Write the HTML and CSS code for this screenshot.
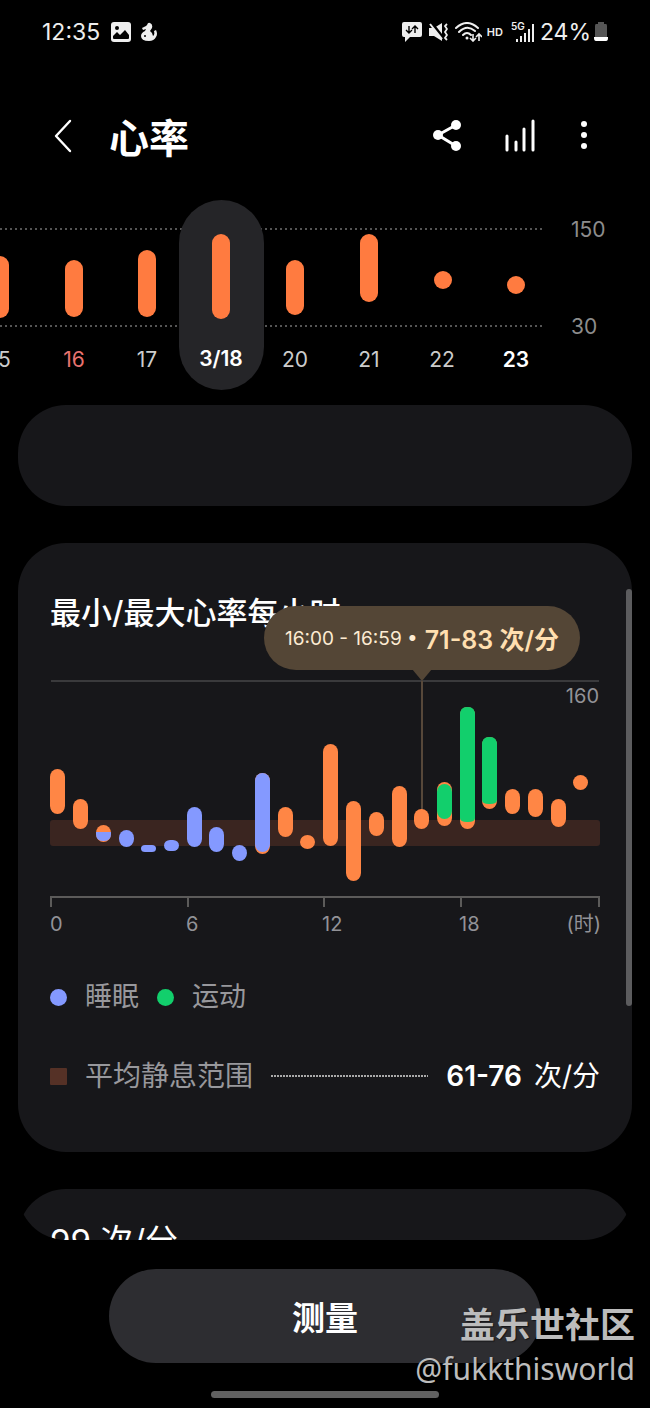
FILE: index.html
```html
<!DOCTYPE html>
<html lang="zh-CN">
<head>
<meta charset="utf-8">
<meta name="viewport" content="width=device-width, initial-scale=1">
<title>心率</title>
<link rel="stylesheet" href="styles.css">
</head>
<body>
<div class="status">
  <span class="status-text">12:35</span>
  <svg class="status-image" width="20" height="20" viewBox="0 0 20 20" aria-hidden="true">
    <rect width="20" height="20" rx="3" fill="#eee"/>
    <circle cx="6" cy="6" r="2" fill="#000"/>
    <path d="M2 16V14l4-4 3 3 5-5 4 5v3q0 1-1 1H3q-1 0-1-1z" fill="#000"/>
  </svg>
  <svg class="status-pet" width="16" height="20" viewBox="0 0 16 20" aria-hidden="true">
    <path d="M6 3Q7 0 9 1q3 1 2 5L9 9q3 2 3 5 2-1 1-5l2-1q2 4 0 7-2 4-7 4Q0 19 0 14q0-3 4-5l1-2-3 1-1-2 4-2z" fill="#eee"/>
    <circle cx="4" cy="14" r="1" fill="#000"/>
  </svg>
  <span class="status-space"></span>
  <svg class="status-message" width="20" height="20" viewBox="0 0 20 20" aria-hidden="true">
    <path d="M2 0h16q2 0 2 2v11q0 2-2 2H8l-5 5v-5H2q-2 0-2-2V2q0-2 2-2z" fill="#eee"/>
    <path d="M7 4v7M4 8l3 3 3-3M13 11V4M10 7l3-3 3 3" fill="none" stroke="#000" stroke-width="1.4"/>
  </svg>
  <svg class="status-mute" width="19" height="20" viewBox="0 0 19 20" aria-hidden="true">
    <path d="M0 6h5l8-5v18l-8-5H0z" fill="#eee"/>
    <path d="M1 -1l14 18" stroke="#000" stroke-width="3"/>
    <path d="M1 2l12 15" stroke="#eee" stroke-width="2"/>
    <path d="M18 2l-2 2 2 3-2 3 2 3-2 3 2 2" fill="none" stroke="#eee" stroke-width="1.8"/>
  </svg>
  <svg class="status-wifi" width="27" height="20" viewBox="0 0 27 20" aria-hidden="true">
    <path d="M1 6Q12-4 23 6M4 10q8-8 16-1M8 13q4-4 8 0" fill="none" stroke="#eee" stroke-width="2" stroke-linecap="round"/>
    <circle cx="12" cy="16" r="1.5" fill="#eee"/>
    <path d="M18 12v7M15 16l3 3 3-3M24 19v-7M21 15l3-3 3 3" fill="none" stroke="#eee" stroke-width="1.6"/>
  </svg>
  <span class="status-hd">HD</span>
  <svg class="status-signal" width="24" height="22" viewBox="0 0 24 22" role="img" aria-label="5G">
    <text class="signal-text" x="0" y="9">5G</text>
    <path d="M6 18v3M10 15v6M14 12v9M18 8v13M22 3v18" stroke="#eee" stroke-width="2"/>
  </svg>
  <span class="status-text">24%</span>
  <svg class="status-battery" width="14" height="20" viewBox="0 0 14 20" aria-hidden="true">
    <path d="M4 0h6v2h2q1 0 1 2v12H1V4q0-2 1-2h2z" fill="#555"/>
    <path d="M0 15h14v1q0 3-2 3H2q-2 0-2-3z" fill="#fff"/>
  </svg>
</div>

<header class="appbar">
  <button class="icon-button back" type="button" aria-label="返回">
    <svg width="20" height="34" viewBox="0 0 20 34"><path d="M17 2L3 17l14 15" fill="none" stroke="#fff" stroke-width="2.4" stroke-linecap="round" stroke-linejoin="round"/></svg>
  </button>
  <h1 class="appbar-title">心率</h1>
  <button class="icon-button" type="button" aria-label="分享">
    <svg width="32" height="34" viewBox="0 0 32 34"><path d="M24 6L6 16l18 11" fill="none" stroke="#fff" stroke-width="3"/><g fill="#fff"><circle cx="24" cy="6" r="5"/><circle cx="6" cy="16" r="5"/><circle cx="24" cy="27" r="5"/></g></svg>
  </button>
  <button class="icon-button" type="button" aria-label="图表">
    <svg width="32" height="34" viewBox="0 0 32 34"><path d="M3 17v14M12 23v8M20 10v21M29 2v29" stroke="#fff" stroke-width="3" stroke-linecap="round"/></svg>
  </button>
  <button class="icon-button" type="button" aria-label="更多选项">
    <svg width="16" height="34" viewBox="0 0 16 34"><g fill="#fff"><circle cx="8" cy="5" r="3"/><circle cx="8" cy="16" r="3"/><circle cx="8" cy="27" r="3"/></g></svg>
  </button>
</header>

<svg class="trend" viewBox="0 200 650 190" role="img" aria-label="每日心率">
  <path class="trend-grid" d="M0 229H544M0 326H544"/>
  <rect class="trend-selected" x="179" y="200" width="85" height="190" rx="43"/>
  <g class="trend-bars">
    <rect x="-9" y="256" width="18" height="62" rx="9"/>
    <rect x="65" y="260" width="18" height="57" rx="9"/>
    <rect x="138" y="250" width="18" height="67" rx="9"/>
    <rect x="212" y="234" width="18" height="85" rx="9"/>
    <rect x="286" y="260" width="18" height="55" rx="9"/>
    <rect x="360" y="234" width="18" height="68" rx="9"/>
    <circle cx="443" cy="280" r="9"/>
    <circle cx="516" cy="285" r="9"/>
  </g>
  <g class="trend-days">
    <text x="0" y="367">15</text>
    <text class="holiday" x="74" y="367">16</text>
    <text x="147" y="367">17</text>
    <text class="strong" x="221" y="366">3/18</text>
    <text x="295" y="367">20</text>
    <text x="369" y="367">21</text>
    <text x="442" y="367">22</text>
    <text class="strong" x="516" y="367">23</text>
  </g>
  <g class="trend-scale">
    <text x="571" y="237">150</text>
    <text x="571" y="334">30</text>
  </g>
</svg>

<main class="viewport">
  <div class="scroll">
    <section class="card card-empty"></section>
    <section class="card card-hourly">
      <h2 class="card-title">最小/最大心率每小时</h2>
      <div class="chart">
        <svg class="chart-plot" viewBox="50 670 550 270" role="img" aria-label="每小时最小和最大心率">
          <path class="chart-top" d="M51 681H599"/>
          <rect class="chart-band" x="50" y="820" width="550" height="26" rx="3"/>
          <path class="chart-marker" d="M422 681V812"/>
          <path class="chart-pointer" d="M412 669h20l-10 12z"/>
          <g class="bar-rest">
            <rect x="50" y="769" width="15" height="45" rx="8"/>
            <rect x="73" y="799" width="15" height="30" rx="8"/>
            <rect x="96" y="825" width="15" height="17" rx="8"/>
            <rect x="255" y="773" width="15" height="81" rx="8"/>
            <rect x="278" y="807" width="15" height="30" rx="8"/>
            <rect x="300" y="835" width="15" height="14" rx="8"/>
            <rect x="323" y="744" width="15" height="102" rx="8"/>
            <rect x="346" y="801" width="15" height="80" rx="8"/>
            <rect x="369" y="812" width="15" height="24" rx="8"/>
            <rect x="392" y="786" width="15" height="61" rx="8"/>
            <rect x="414" y="809" width="15" height="20" rx="8"/>
            <rect x="437" y="782" width="15" height="44" rx="8"/>
            <rect x="460" y="707" width="15" height="122" rx="8"/>
            <rect x="482" y="737" width="15" height="72" rx="8"/>
            <rect x="505" y="789" width="15" height="25" rx="8"/>
            <rect x="528" y="789" width="15" height="28" rx="8"/>
            <rect x="551" y="799" width="15" height="28" rx="8"/>
            <rect x="573" y="775" width="15" height="15" rx="8"/>
          </g>
          <g class="bar-sleep">
            <path d="M96 832h15v2q0 7-7 7h-1q-7 0-7-7z"/>
            <rect x="119" y="830" width="15" height="17" rx="8"/>
            <rect x="141" y="845" width="15" height="7" rx="4"/>
            <rect x="164" y="840" width="15" height="11" rx="6"/>
            <rect x="187" y="807" width="15" height="40" rx="8"/>
            <rect x="209" y="827" width="15" height="25" rx="8"/>
            <rect x="232" y="845" width="15" height="16" rx="8"/>
            <rect x="255" y="773" width="15" height="79" rx="8"/>
          </g>
          <g class="bar-move">
            <rect x="437" y="784" width="15" height="35" rx="8"/>
            <path d="M460 715q0-8 7-8h1q7 0 7 8v103q0 4-7 4h-1q-7 0-7-4z"/>
            <path d="M482 745q0-8 7-8h1q7 0 7 8v55q0 4-7 4h-1q-7 0-7-4z"/>
          </g>
          <path class="chart-axis" d="M51 907V897H599V907M188 897V907M324 897V907M461 897V907"/>
          <g class="chart-labels">
            <text class="label-end" x="599" y="703">160</text>
            <text x="50" y="931">0</text>
            <text x="186" y="931">6</text>
            <text x="322" y="931">12</text>
            <text x="459" y="931">18</text>
            <text class="label-end" x="601" y="931">(时)</text>
          </g>
        </svg>
        <div class="tooltip">
          <span class="tooltip-time">16:00 - 16:59 •</span>
          <strong class="tooltip-value">71-83 次/分</strong>
        </div>
      </div>
      <div class="legend">
        <span class="dot dot-sleep"></span><span>睡眠</span>
        <span class="dot dot-move"></span><span>运动</span>
      </div>
      <div class="resting">
        <span class="dot dot-band"></span>
        <span>平均静息范围</span>
        <span class="leader"></span>
        <span class="resting-value"><strong class="resting-number">61-76</strong><span>次/分</span></span>
      </div>
    </section>
    <section class="card card-next">99 次/分</section>
  </div>
  <div class="thumb"></div>
</main>

<footer class="footer">
  <button class="measure" type="button">测量</button>
  <div class="home-handle"></div>
  <div class="watermark">
    <span class="watermark-site">盖乐世社区</span>
    <span class="watermark-user">@fukkthisworld</span>
  </div>
</footer>
</body>
</html>
```

FILE: styles.css
```css
* { box-sizing: border-box; }

body {
  margin: 0;
  height: 100vh;
  display: flex;
  flex-direction: column;
  overflow: hidden;
  background: #000;
  color: #fff;
  font-family: Inter, "Noto Sans CJK SC", sans-serif;
}

button {
  margin: 0;
  padding: 0;
  border: 0;
  background: none;
  color: inherit;
  font: inherit;
}

.status {
  flex: none;
  display: flex;
  align-items: center;
  height: 64px;
  padding: 0 42px;
  color: #eee;
}
.status-text { font-size: 23px; line-height: 32px; }
.status-image { margin-left: 11px; }
.status-pet { margin-left: 10px; }
.status-space { flex: 1; }
.status-mute { margin-left: 7px; }
.status-wifi { margin-left: 7px; }
.status-hd { margin-left: 5px; font-size: 11px; font-weight: 600; }
.status-signal { margin: 0 5px 0 8px; }
.signal-text { font-size: 10px; font-weight: 600; fill: #eee; }
.status-battery { margin-left: 3px; }

.appbar {
  flex: none;
  display: flex;
  align-items: center;
  gap: 40px;
  height: 88px;
  margin: 28px 0 20px;
  padding: 0 58px 0 53px;
}
.icon-button { display: flex; }
.back { margin-right: -4px; }
.appbar-title {
  flex: 1;
  margin: 0;
  padding-top: 6px;
  font-size: 40px;
  line-height: 56px;
  font-weight: 600;
}

.trend {
  flex: none;
  display: block;
  width: 100%;
  font-size: 21px;
}
.trend-grid { stroke: #555; stroke-width: 2; stroke-dasharray: 2 3; }
.trend-selected { fill: #252528; }
.trend-bars { fill: #ff7b40; }
.trend-days { fill: #ccc; text-anchor: middle; }
.trend-days .holiday { fill: #e8736f; }
.trend-days .strong { fill: #fff; font-weight: 600; }
.trend-scale { fill: #8c8c8c; }

.viewport {
  flex: 1;
  min-height: 0;
  position: relative;
  margin: 15px 18px 0;
}
.scroll {
  height: 100%;
  display: flex;
  flex-direction: column;
  gap: 37px;
  overflow-y: auto;
  scrollbar-width: none;
  border-radius: 0 0 48px 48px;
}
.thumb {
  position: absolute;
  top: 22%;
  right: 0;
  width: 6px;
  height: 50%;
  border-radius: 3px;
  background: #5c5c5e;
}

.card {
  flex: none;
  border-radius: 48px;
  background: #17171a;
}
.card-empty { height: 101px; }
.card-hourly { padding: 48px 32px 56px; }
.card-title {
  margin: 0 0 35px;
  font-size: 31px;
  line-height: 44px;
  font-weight: 500;
}
.card-next {
  padding: 30px 32px;
  font-size: 33px;
  line-height: 44px;
}

.chart { position: relative; }
.chart-plot { display: block; width: 100%; }
.chart-top { stroke: #3a3a3c; stroke-width: 2; }
.chart-band { fill: #3a2520; }
.chart-marker { stroke: #57483a; stroke-width: 2; }
.chart-pointer { fill: #544636; }
.chart-axis { fill: none; stroke: #5c5b5a; stroke-width: 2; }
.chart-labels { fill: #929297; font-size: 20px; }
.label-end { text-anchor: end; }
.bar-rest { fill: #ff8645; }
.bar-sleep { fill: #8499ff; }
.bar-move { fill: #12cf6c; }

.tooltip {
  position: absolute;
  right: 20px;
  bottom: 100%;
  display: flex;
  align-items: center;
  gap: 7px;
  height: 64px;
  padding: 0 21px;
  border-radius: 32px;
  background: #544636;
  color: #fdebd2;
  white-space: nowrap;
}
.tooltip-time { font-size: 19px; }
.tooltip-value { font-size: 25px; font-weight: 600; color: #ffdfb0; }

.legend,
.resting {
  display: flex;
  align-items: center;
  gap: 18px;
  color: #98989c;
  font-size: 27px;
  line-height: 40px;
}
.legend { margin: 37px 0 39px; }
.resting { font-size: 28px; }
.dot { flex: none; width: 17px; height: 17px; border-radius: 50%; }
.dot-sleep { background: #8499ff; }
.dot-move { background: #12cf6c; }
.dot-band { border-radius: 1px; background: #553126; }
.leader { flex: 1; height: 2px; background: repeating-linear-gradient(90deg, #aaa 0 2px, #17171a 2px 3px); }
.resting-value {
  display: flex;
  align-items: baseline;
  gap: 12px;
  color: #fff;
}
.resting-number { font-weight: 600; }

.footer {
  flex: none;
  position: relative;
  display: flex;
  flex-direction: column;
  align-items: center;
  gap: 28px;
  padding: 29px 0 10px;
}
.measure {
  width: 66.6%;
  height: 94px;
  border-radius: 47px;
  background: #2d2d31;
  font-size: 33px;
  font-weight: 600;
}
.home-handle {
  width: 35%;
  height: 7px;
  border-radius: 4px;
  background: #616161;
}
.watermark {
  position: absolute;
  right: 15px;
  bottom: 17px;
  display: flex;
  flex-direction: column;
  align-items: flex-end;
  color: #bcbcbc;
  text-shadow: 1px 1px 1px #0008;
}
.watermark-site { font-size: 35px; line-height: 44px; font-weight: 700; }
.watermark-user { font-family: "Noto Sans", sans-serif; font-size: 30px; line-height: 44px; }
```
